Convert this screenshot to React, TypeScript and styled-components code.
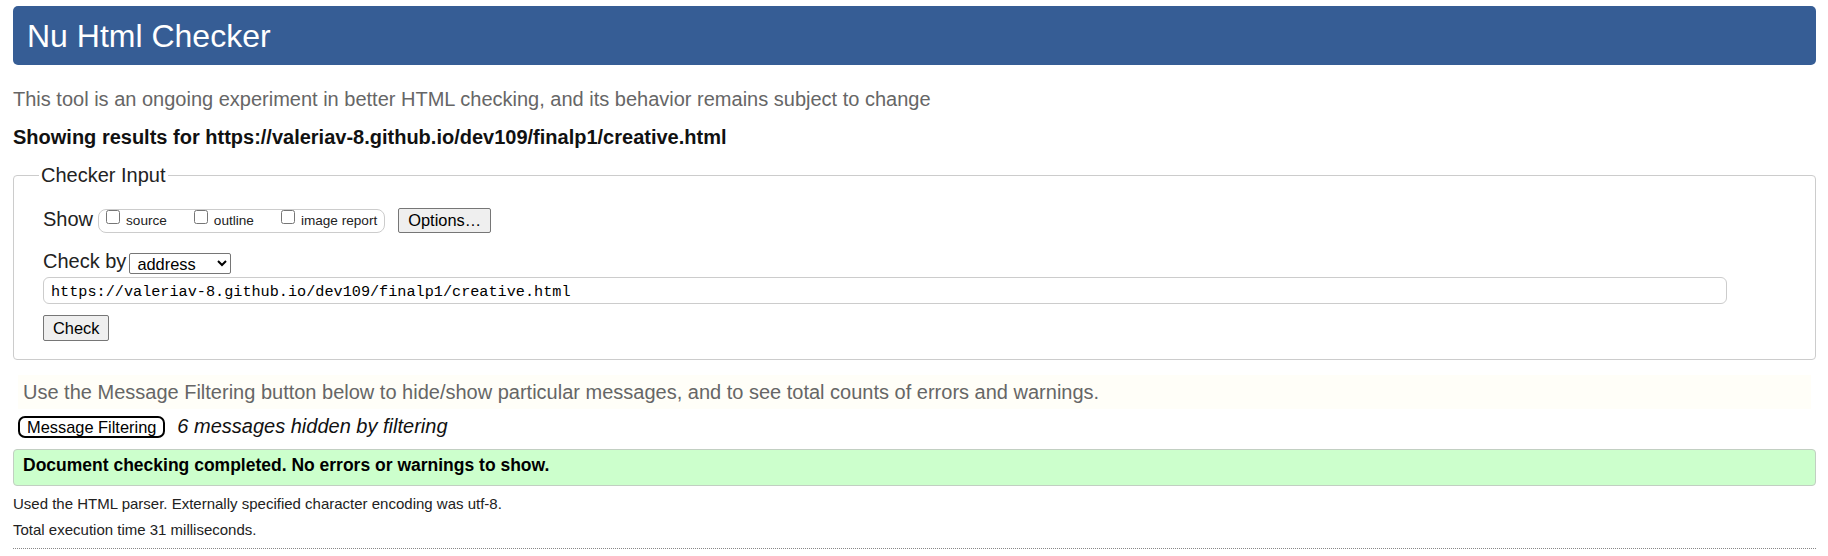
import React from "react";
import styled, { createGlobalStyle } from "styled-components";

const GlobalStyle = createGlobalStyle`
  html, body {
    margin: 0;
    padding: 0;
    background: #fff;
  }
  body {
    font-family: "Liberation Sans", Arial, Helvetica, sans-serif;
    color: #000;
  }
`;

const Page = styled.div`
  display: flex;
  flex-direction: column;
  padding: 6px 12px 0 13px;
`;

const Banner = styled.h1`
  margin: 0;
  height: 59px;
  box-sizing: border-box;
  display: flex;
  align-items: center;
  padding: 2px 0 0 14px;
  background: #365d95;
  color: #fff;
  border-radius: 5px;
  font-size: 32px;
  font-weight: normal;
`;

const Intro = styled.p`
  margin: 22px 0 0;
  font-size: 20px;
  line-height: 24px;
  color: #666;
`;

const ResultsFor = styled.p`
  margin: 14px 0 0;
  font-size: 20px;
  line-height: 24px;
  font-weight: bold;
  color: #111;
`;

const InputSet = styled.fieldset`
  margin: 14px 0 0;
  padding: 20px 0 18px 29px;
  border: 1px solid #ccc;
  border-radius: 4px;
  min-width: 0;
`;

const Legend = styled.legend`
  margin-left: -4px;
  padding: 0 2px;
  font-size: 20px;
  line-height: 24px;
  color: #222;
`;

const Row = styled.div<{ $top?: number }>`
  display: flex;
  align-items: flex-start;
  margin-top: ${(p) => p.$top ?? 0}px;
`;

const FieldLabel = styled.span`
  font-size: 20px;
  line-height: 24px;
  color: #222;
`;

const ToggleGroup = styled.span`
  display: flex;
  align-items: flex-start;
  gap: 27px;
  height: 24px;
  box-sizing: border-box;
  margin: 2px 0 0 5px;
  padding: 0 7px 0 7px;
  border: 1px solid #ccc;
  border-radius: 8px;
`;

const Toggle = styled.label`
  display: flex;
  align-items: flex-start;
  input {
    margin: 0;
    width: 14px;
    height: 14px;
  }
  span {
    margin: 3px 0 0 6px;
    font-size: 13.6px;
    line-height: 16px;
    color: #222;
  }
`;

const PlainButton = styled.button<{ $left?: number; $top?: number }>`
  height: ${(p) => (p.$top === 1 ? 25 : 26)}px;
  box-sizing: border-box;
  margin: ${(p) => p.$top ?? 0}px 0 0 ${(p) => p.$left ?? 0}px;
  padding: 0 9px;
  background: #efefef;
  border: 1px solid #767676;
  border-radius: 2px;
  font-family: "Liberation Sans", Arial, sans-serif;
  font-size: 16.4px;
  color: #000;
`;

const Picker = styled.select`
  width: 102px;
  height: 21px;
  margin: 4px 0 0 3px;
  padding: 0 0 0 3px;
  border: 1px solid #767676;
  border-radius: 2px;
  background: #fff;
  font-family: "Liberation Sans", Arial, sans-serif;
  font-size: 16.4px;
  color: #000;
`;

const UrlField = styled.input`
  display: block;
  width: calc(100% - 88px);
  height: 27px;
  box-sizing: border-box;
  margin-top: 3px;
  padding: 3px 7px 0;
  border: 1px solid #ccc;
  border-radius: 6px;
  font-family: "Liberation Mono", "DejaVu Sans Mono", monospace;
  font-size: 15.2px;
  color: #000;
  outline: none;
`;

const FilterHint = styled.div`
  margin: 15px 5px 0;
  height: 34px;
  padding-left: 5px;
  background: #fffef8;
  font-size: 20px;
  line-height: 35px;
  color: #666;
`;

const FilterButton = styled.button`
  height: 22px;
  box-sizing: border-box;
  margin: 3px 0 0 5px;
  padding: 0 7px;
  background: #fff;
  border: 2px solid #000;
  border-radius: 7px;
  font-family: "Liberation Sans", Arial, sans-serif;
  font-size: 16.4px;
  color: #000;
`;

const HiddenCount = styled.span`
  margin: 1px 0 0 12px;
  font-size: 20px;
  line-height: 24px;
  font-style: italic;
  color: #111;
`;

const Success = styled.div`
  margin-top: 11px;
  height: 37px;
  box-sizing: border-box;
  padding: 5px 9px 0;
  background: #ccffcc;
  border: 1px solid #c2cfc2;
  border-radius: 4px;
  font-size: 17.5px;
  line-height: 21px;
  font-weight: bold;
  color: #000;
`;

const Note = styled.p<{ $top: number }>`
  margin: ${(p) => p.$top}px 0 0;
  font-size: 15px;
  line-height: 18px;
  color: #222;
`;

const Rule = styled.hr`
  margin: 9px 0 0;
  border: 0;
  border-top: 1px dotted #888;
`;

const toggles = ["source", "outline", "image report"];
const pageUrl = "https://valeriav-8.github.io/dev109/finalp1/creative.html";

export default function App() {
  return (
    <>
      <GlobalStyle />
      <Page>
        <Banner>Nu Html Checker</Banner>
        <Intro>
          This tool is an ongoing experiment in better HTML checking, and its
          behavior remains subject to change
        </Intro>
        <ResultsFor>Showing results for {pageUrl}</ResultsFor>

        <InputSet>
          <Legend>Checker Input</Legend>
          <Row>
            <FieldLabel>Show</FieldLabel>
            <ToggleGroup>
              {toggles.map((t) => (
                <Toggle key={t}>
                  <input type="checkbox" />
                  <span>{t}</span>
                </Toggle>
              ))}
            </ToggleGroup>
            <PlainButton $left={13} $top={1}>
              Options…
            </PlainButton>
          </Row>
          <Row $top={16}>
            <FieldLabel>Check by</FieldLabel>
            <Picker defaultValue="address">
              <option value="address">address</option>
              <option value="file">file upload</option>
              <option value="text">text input</option>
            </Picker>
          </Row>
          <UrlField type="url" defaultValue={pageUrl} />
          <Row $top={11}>
            <PlainButton>Check</PlainButton>
          </Row>
        </InputSet>

        <FilterHint>
          Use the Message Filtering button below to hide/show particular
          messages, and to see total counts of errors and warnings.
        </FilterHint>
        <Row $top={4}>
          <FilterButton>Message Filtering</FilterButton>
          <HiddenCount>6 messages hidden by filtering</HiddenCount>
        </Row>

        <Success>Document checking completed. No errors or warnings to show.</Success>

        <Note $top={9}>
          Used the HTML parser. Externally specified character encoding was
          utf-8.
        </Note>
        <Note $top={8}>Total execution time 31 milliseconds.</Note>
        <Rule />
      </Page>
    </>
  );
}
